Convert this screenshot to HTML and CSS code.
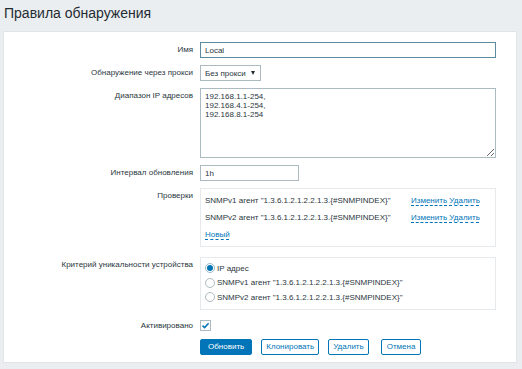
FILE: index.html
```html
<!DOCTYPE html>
<html lang="ru">
<head>
<meta charset="utf-8">
<title>Правила обнаружения</title>
<link rel="stylesheet" href="styles.css">
</head>
<body class="page">
<h1 class="title">Правила обнаружения</h1>
<main class="panel">
  <form class="form">
    <div class="label">Имя</div>
    <div class="field"><input class="input input-wide is-focused" type="text" value="Local"></div>

    <div class="label">Обнаружение через прокси</div>
    <div class="field">
      <div class="select"><span class="select-text">Без прокси</span><span class="select-arrow"></span></div>
    </div>

    <div class="label">Диапазон IP адресов</div>
    <div class="field"><textarea class="textarea">192.168.1.1-254,
192.168.4.1-254,
192.168.8.1-254</textarea></div>

    <div class="label">Интервал обновления</div>
    <div class="field"><input class="input input-short" type="text" value="1h"></div>

    <div class="label">Проверки</div>
    <div class="field">
      <div class="box checks">
        <div class="check-row">
          <span class="check-name">SNMPv1 агент "1.3.6.1.2.1.2.2.1.3.{#SNMPINDEX}"</span>
          <span class="check-actions"><a class="link">Изменить</a> <a class="link">Удалить</a></span>
        </div>
        <div class="check-row">
          <span class="check-name">SNMPv2 агент "1.3.6.1.2.1.2.2.1.3.{#SNMPINDEX}"</span>
          <span class="check-actions"><a class="link">Изменить</a> <a class="link">Удалить</a></span>
        </div>
        <div class="check-row"><a class="link">Новый</a></div>
      </div>
    </div>

    <div class="label row-gap-extra">Критерий уникальности устройства</div>
    <div class="field row-gap-extra">
      <div class="box radios">
        <div class="radio-row"><span class="radio is-checked"></span><span>IP адрес</span></div>
        <div class="radio-row"><span class="radio"></span><span>SNMPv1 агент "1.3.6.1.2.1.2.2.1.3.{#SNMPINDEX}"</span></div>
        <div class="radio-row"><span class="radio"></span><span>SNMPv2 агент "1.3.6.1.2.1.2.2.1.3.{#SNMPINDEX}"</span></div>
      </div>
    </div>

    <div class="label label-check row-gap-extra">Активировано</div>
    <div class="field row-gap-extra">
      <span class="checkbox"><svg viewBox="0 0 11 11" width="11" height="11"><path d="M2.5 5.6 L4.6 7.6 L8.6 3.2" fill="none" stroke="#0275b8" stroke-width="1.5"/></svg></span>
    </div>

    <div class="label row-gap-small"></div>
    <div class="field buttons row-gap-small">
      <button class="btn btn-primary" type="button">Обновить</button>
      <button class="btn btn-alt" type="button">Клонировать</button>
      <button class="btn btn-alt" type="button">Удалить</button>
      <button class="btn btn-alt btn-wide" type="button">Отмена</button>
    </div>
  </form>
</main>
</body>
</html>
```

FILE: styles.css
```css
* { box-sizing: border-box; }

html, body { margin: 0; padding: 0; }

.page {
  background: #ebeef0;
  font-family: "Liberation Sans", Arial, sans-serif;
  font-size: 8px;
  color: #2a363d;
  padding: 0 5px 6px 3px;
}

.title {
  margin: 0;
  padding: 0 0 5px 1px;
  font-size: 14px;
  font-weight: normal;
  line-height: 26px;
  color: #1f2c33;
}

.panel {
  background: #fff;
  border: 1px solid #dfe4e7;
  padding: 10px 0 7px 0;
}

.form {
  display: grid;
  grid-template-columns: 189px 296px;
  column-gap: 7px;
  row-gap: 7px;
  align-items: start;
}

.label {
  text-align: right;
  line-height: 16px;
  white-space: nowrap;
}

.label-check { line-height: 11px; }

.row-gap-extra { margin-top: 3px; }
.row-gap-small { margin-top: 1px; }

.field { display: flex; }

.input {
  height: 16px;
  border: 1px solid #acbbc2;
  padding: 0 4px;
  font: 8px "Liberation Sans", Arial, sans-serif;
  color: #2a363d;
  background: #fff;
  outline: none;
}

.input-wide { width: 296px; }
.input-short { width: 99px; }
.is-focused { border-color: #5f8ba0; }

.select {
  display: flex;
  align-items: center;
  gap: 5px;
  height: 16px;
  border: 1px solid #acbbc2;
  padding: 0 5px 0 4px;
  background: #fff;
  white-space: nowrap;
}

.select-text { white-space: nowrap; }

.select-arrow {
  flex: none;
  width: 0;
  height: 0;
  border-left: 2.5px solid transparent;
  border-right: 2.5px solid transparent;
  border-top: 4px solid #1f2c33;
}

.textarea {
  width: 296px;
  height: 70px;
  border: 1px solid #acbbc2;
  padding: 3px 4px;
  font: 8px/9px "Liberation Sans", Arial, sans-serif;
  color: #2a363d;
  resize: both;
  outline: none;
}

.box {
  width: 296px;
  border: 1px solid #e6eaec;
  background: #fff;
}

.checks { padding: 3px 15px 3px 4px; }

.check-row {
  display: flex;
  align-items: center;
  height: 17px;
}

.check-name { width: 206px; white-space: nowrap; }

.check-actions { white-space: nowrap; }

.link {
  color: #0275b8;
  text-decoration: underline dashed #0275b8;
  text-decoration-thickness: 1px;
  text-underline-offset: 2px;
}

.radios { padding: 3px 4px 4px 4px; }

.radio-row {
  display: flex;
  align-items: center;
  gap: 2px;
  height: 14.5px;
}

.radio {
  width: 10px;
  height: 10px;
  border-radius: 50%;
  border: 1px solid #acbbc2;
  background: #fff;
  flex: none;
  display: flex;
  align-items: center;
  justify-content: center;
}

.radio.is-checked { border-color: #9fbdd0; }

.radio.is-checked::after {
  content: "";
  width: 6px;
  height: 6px;
  border-radius: 50%;
  background: #0275b8;
}

.checkbox {
  width: 11px;
  height: 11px;
  border: 1px solid #acbbc2;
  display: flex;
  align-items: center;
  justify-content: center;
  background: #fff;
}

.checkbox svg { display: block; flex: none; }

.buttons { gap: 9px; }

.btn {
  height: 16px;
  padding: 0 4px;
  font: 8px "Liberation Sans", Arial, sans-serif;
  border: 1px solid #0275b8;
  border-radius: 2px;
  cursor: pointer;
}

.btn-primary {
  background: #0275b8;
  color: #fff;
  padding: 0 7px;
}

.btn-alt {
  background: #fff;
  color: #0275b8;
}

.btn-wide { margin-left: 3px; padding: 0 5px; }
```
